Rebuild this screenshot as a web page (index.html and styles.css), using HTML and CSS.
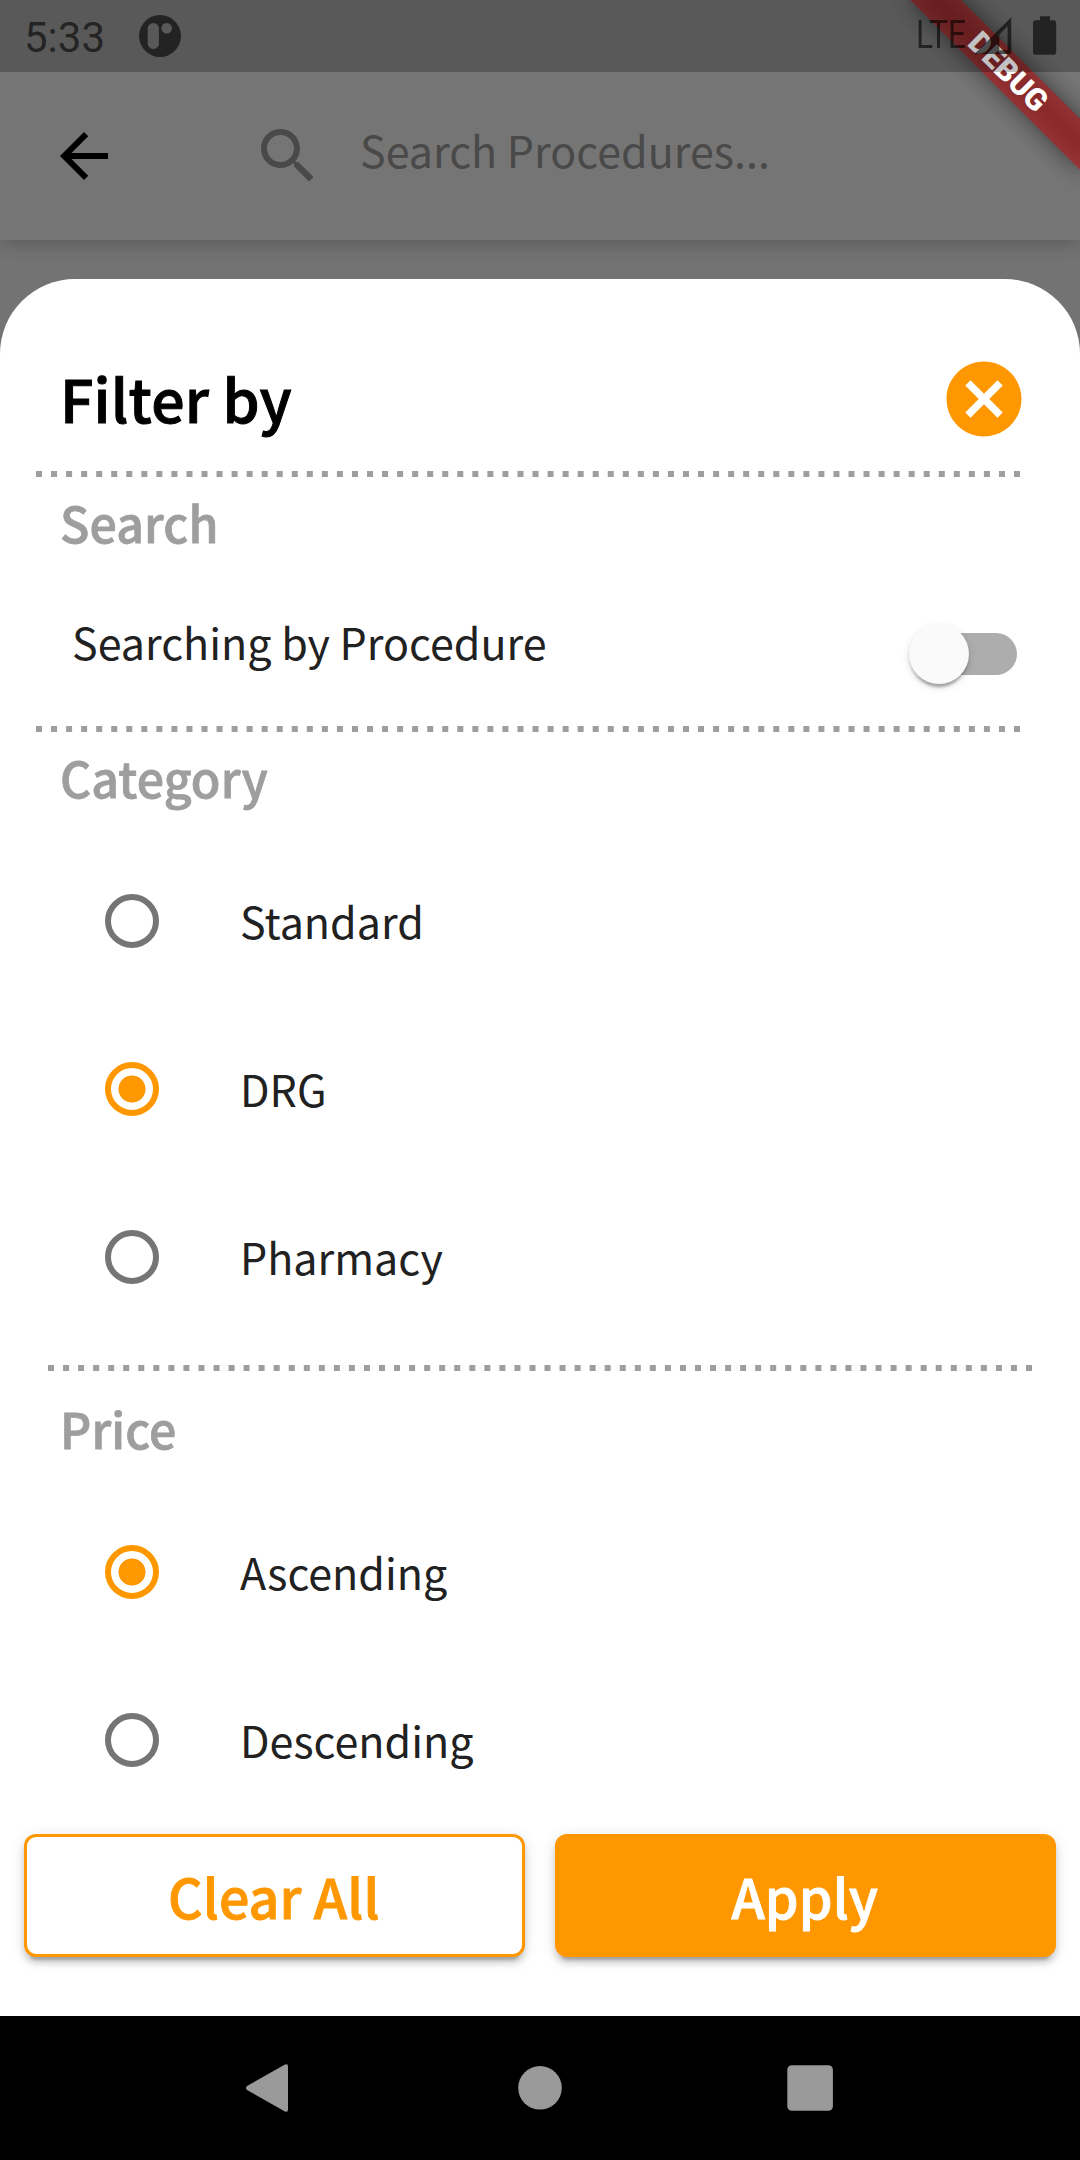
FILE: index.html
```html
<!DOCTYPE html>
<html lang="en">
<head>
  <meta charset="utf-8">
  <title>Filter by</title>
  <link rel="stylesheet" href="styles.css">
</head>
<body>
  <div class="screen">
    <header class="app-bar">
      <svg class="icon" viewBox="0 0 24 24"><path fill="#000" d="M20 11H7.83l5.59-5.59L12 4l-8 8 8 8 1.41-1.41L7.83 13H20v-2z"/></svg>
      <div class="search">
        <svg class="icon" viewBox="0 0 24 24"><path fill="#494949" d="M15.5 14h-.79l-.28-.27C15.41 12.59 16 11.11 16 9.5 16 5.91 13.09 3 9.5 3S3 5.91 3 9.5 5.91 16 9.5 16c1.61 0 3.09-.59 4.23-1.57l.27.28v.79l5 4.99L20.49 19l-4.99-5zm-6 0C7.01 14 5 11.99 5 9.5S7.01 5 9.5 5 14 7.01 14 9.5 11.99 14 9.5 14z"/></svg>
        <span class="search-hint">Search Procedures...</span>
      </div>
    </header>

    <main class="sheet">
      <div class="sheet-head">
        <h1 class="title">Filter by</h1>
        <svg class="close" viewBox="0 0 24 24"><path fill="#ff9800" d="M12 2C6.47 2 2 6.47 2 12s4.47 10 10 10 10-4.47 10-10S17.53 2 12 2zm5 13.59L15.59 17 12 13.41 8.41 17 7 15.59 10.59 12 7 8.41 8.41 7 12 10.59 15.59 7 17 8.41 13.41 12 17 15.59z"/></svg>
      </div>

      <svg class="dots" viewBox="0 0 984 6"><line x1="0" y1="3" x2="984" y2="3"/></svg>
      <section class="group">
        <h2 class="heading">Search</h2>
        <div class="switch-row">
          <span class="label">Searching by Procedure</span>
          <span class="switch"><span class="thumb"></span></span>
        </div>
      </section>

      <svg class="dots" viewBox="0 0 984 6"><line x1="0" y1="3" x2="984" y2="3"/></svg>
      <section class="group group-category">
        <h2 class="heading">Category</h2>
        <div class="options">
          <div class="option"><span class="radio"></span><span class="label">Standard</span></div>
          <div class="option"><span class="radio radio-on"></span><span class="label">DRG</span></div>
          <div class="option"><span class="radio"></span><span class="label">Pharmacy</span></div>
        </div>
      </section>

      <svg class="dots dots-price" viewBox="0 0 984 6"><line x1="0" y1="3" x2="984" y2="3"/></svg>
      <section class="group group-price">
        <h2 class="heading">Price</h2>
        <div class="options">
          <div class="option"><span class="radio radio-on"></span><span class="label">Ascending</span></div>
          <div class="option"><span class="radio"></span><span class="label">Descending</span></div>
        </div>
      </section>

      <div class="actions">
        <button class="btn btn-outline">Clear All</button>
        <button class="btn btn-solid">Apply</button>
      </div>
    </main>

    <nav class="nav-bar">
      <svg class="nav-icon" viewBox="0 0 72 72"><path d="M13 34 51 12.5Q54 11.3 54 14.5V57.5Q54 60.7 51 59.5L13 38Q11 36 13 34z"/></svg>
      <svg class="nav-icon" viewBox="0 0 72 72"><circle cx="36" cy="35.8" r="21.8"/></svg>
      <svg class="nav-icon" viewBox="0 0 72 72"><rect x="13.3" y="13.3" width="45.6" height="45.4" rx="4.5"/></svg>
    </nav>

    <div class="banner-clip">
      <div class="banner"><span class="banner-shadow"></span><span class="banner-text">DEBUG</span></div>
    </div>

    <div class="status-bar">
      <span class="clock">5:33</span>
      <svg class="app-glyph" viewBox="0 0 42 42"><path fill-rule="evenodd" d="M21 0a21 21 0 1 1 0 42a21 21 0 1 1 0-42zM14.3 8a5.6 5.6 0 0 0-5.6 5.6v14.8a5.6 5.6 0 0 0 11.2 0V13.6a5.6 5.6 0 0 0-5.6-5.6zM27.7 8a5.3 5.3 0 1 0 0 10.6a5.3 5.3 0 1 0 0-10.6z"/></svg>
      <span class="lte"><span class="lte-text">LTE</span></span>
      <svg class="signal" viewBox="0 0 38 38"><path fill-rule="evenodd" d="M0.5 37 37.2 0.2V37zM25.3 17.5V33.2H33.6V9.2z"/></svg>
      <svg class="battery" viewBox="0 0 24 40"><path d="M7 0.2h10v4h3.4a2.8 2.8 0 0 1 2.8 2.8v28.9a2.8 2.8 0 0 1-2.8 2.8H2.8a2.8 2.8 0 0 1-2.8-2.8V7a2.8 2.8 0 0 1 2.8-2.8H7z"/></svg>
    </div>
  </div>
</body>
</html>
```
FILE: styles.css
```css
* {
  box-sizing: border-box;
}

body {
  margin: 0;
  background: #000;
  font-family: "Noto Sans CJK JP", "Noto Sans", sans-serif;
}

h1, h2 {
  margin: 0;
  font-weight: 500;
}

.screen {
  position: relative;
  display: flex;
  flex-direction: column;
  width: 1080px;
  height: 2160px;
  overflow: hidden;
  background: #737373;
}

.icon {
  flex: none;
  width: 72px;
  height: 72px;
}

/* App bar, dimmed behind the sheet */
.app-bar {
  flex: none;
  display: flex;
  align-items: flex-start;
  gap: 132px;
  height: 240px;
  padding: 120px 48px 0;
  background: #757575;
  box-shadow: 0 6px 12px -3px rgba(0, 0, 0, .13), 0 12px 15px rgba(0, 0, 0, .03), 0 3px 30px rgba(0, 0, 0, .04);
}

.search {
  display: flex;
  gap: 36px;
}

.search-hint {
  height: 72px;
  font-size: 43px;
  line-height: 58px;
  color: #494949;
}

/* Bottom sheet */
.sheet {
  flex: none;
  position: relative;
  display: flex;
  flex-direction: column;
  height: 1737px;
  margin-top: 39px;
  border-radius: 75px 75px 0 0;
  background: #fff;
}

.sheet-head {
  display: flex;
  justify-content: space-between;
  align-items: flex-start;
  height: 192px;
  padding: 74.5px 51px 0 60px;
}

.title {
  font-size: 59px;
  line-height: 88px;
  letter-spacing: .2px;
  -webkit-text-stroke: 1px currentColor;
  color: #000;
}

.close {
  width: 90px;
  height: 90px;
}

.dots {
  flex: none;
  width: 984px;
  height: 6px;
  margin-left: 36px;
}

.dots line {
  stroke: #9e9e9e;
  stroke-width: 6;
  stroke-dasharray: 6 9.0462;
}

.dots-price {
  margin-left: 48px;
}

.group {
  flex: none;
  height: 249px;
  padding: 9px 60px 0;
}

.group-category {
  height: 633px;
}

.group-price {
  height: 459px;
  padding-top: 21px;
}

.heading {
  font-size: 48.3px;
  line-height: 72px;
  letter-spacing: .1px;
  -webkit-text-stroke: .8px currentColor;
  color: #9e9e9e;
}

.switch-row {
  display: flex;
  justify-content: space-between;
  align-items: center;
  height: 60px;
  margin: 66px 3px 0 12px;
}

.label {
  padding-bottom: 2px;
  font-size: 43px;
  line-height: 60px;
  color: #212121;
}

.switch-row .label {
  padding-bottom: 26px;
}

.switch {
  position: relative;
  width: 99px;
  height: 42px;
  border-radius: 21px;
  background: #adadad;
}

.thumb {
  position: absolute;
  left: -9px;
  top: -9px;
  width: 60px;
  height: 60px;
  border-radius: 50%;
  background: #fafafa;
  box-shadow: 0 6px 3px -3px rgba(0, 0, 0, .2), 0 3px 3px rgba(0, 0, 0, .14), 0 3px 9px rgba(0, 0, 0, .12);
}

.options {
  display: flex;
  flex-direction: column;
  padding: 24px 0 0 45px;
}

.option {
  display: flex;
  align-items: center;
  gap: 81px;
  height: 168px;
}

.radio {
  width: 54px;
  height: 54px;
  border: 6px solid #757575;
  border-radius: 50%;
}

.radio-on {
  border-color: #ff9800;
  background: radial-gradient(circle, #ff9800 13.1px, transparent 13.9px);
}

/* Bottom actions */
.actions {
  position: absolute;
  left: 24px;
  right: 24px;
  bottom: 59px;
  display: flex;
  gap: 30px;
}

.btn {
  flex: 1;
  height: 122.6px;
  padding: 0 1.5px 0 0;
  border: 3px solid #ff9800;
  border-radius: 12px;
  font: 500 53.7px/86px "Noto Sans CJK JP", "Noto Sans", sans-serif;
  letter-spacing: .1px;
  -webkit-text-stroke: .9px currentColor;
  box-shadow: 0 9px 3px -6px rgba(0, 0, 0, .2), 0 6px 6px rgba(0, 0, 0, .14), 0 3px 15px rgba(0, 0, 0, .12);
}

.btn-outline {
  background: #fff;
  color: #ff9800;
}

.btn-solid {
  background: #ff9800;
  color: #fff;
}

/* System navigation */
.nav-bar {
  flex: none;
  display: flex;
  justify-content: center;
  align-items: center;
  gap: 198px;
  height: 144px;
  background: #000;
}

.nav-icon {
  width: 72px;
  height: 72px;
  fill: #999;
}

/* Debug ribbon over the top right corner */
.banner-clip {
  position: absolute;
  top: 0;
  right: 0;
  width: 240px;
  height: 240px;
  overflow: hidden;
}

.banner {
  position: absolute;
  left: 120px;
  top: 84px;
  width: 240px;
  height: 36px;
  transform-origin: 120px -84px;
  transform: rotate(45deg);
}

.banner-shadow {
  position: absolute;
  inset: 0;
  background: rgba(0, 0, 0, .5);
  filter: blur(11.5px);
}

.banner-text {
  position: absolute;
  inset: 0;
  background: rgba(183, 28, 28, .627);
  font: 900 30.6px/36px Roboto, sans-serif;
  text-align: center;
  color: #fff;
}

/* System status bar over everything */
.status-bar {
  position: absolute;
  top: 0;
  left: 0;
  display: flex;
  align-items: flex-start;
  width: 1080px;
  height: 72px;
  padding-left: 24px;
  background: rgba(0, 0, 0, .24);
  color: rgba(0, 0, 0, .6);
  fill: rgba(0, 0, 0, .6);
}

.clock {
  width: 115px;
  margin-top: 12.5px;
  font: 400 42px/49px Roboto, sans-serif;
}

.app-glyph {
  width: 42px;
  height: 42px;
  margin-top: 15px;
}

.lte {
  width: 58px;
  margin: 14px 0 0 735px;
}

.lte-text {
  display: inline-block;
  font: 400 38px/43px Roboto, sans-serif;
  transform: scaleX(.84);
  transform-origin: 0 0;
}

.signal {
  width: 38px;
  height: 38px;
  margin-top: 17px;
}

.battery {
  width: 24px;
  height: 40px;
  margin: 16px 0 0 21px;
}
```
